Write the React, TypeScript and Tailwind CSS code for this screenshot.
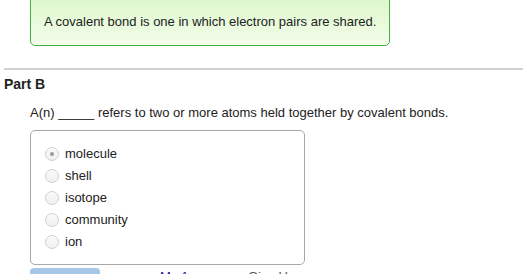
import React from 'react'

const options = ['molecule', 'shell', 'isotope', 'community', 'ion']

function Radio({ checked }: { checked: boolean }) {
  return (
    <span className="flex h-[14px] w-[14px] items-center justify-center rounded-full border border-[#d0d0d0] bg-gradient-to-b from-[#fafafa] to-[#f0f0f0]">
      {checked && <span className="h-[4px] w-[4px] rounded-full bg-[#999]" />}
    </span>
  )
}

export default function App() {
  return (
    <div className="h-[274px] w-[523px] overflow-hidden bg-white font-['Liberation_Sans',Arial,sans-serif] text-[13px] text-[#222]">
      {/* feedback box from Part A */}
      <div className="-mt-[3px] ml-[30px] w-[360px] whitespace-nowrap rounded-b-[5px] border border-[#44b044] bg-gradient-to-b from-[#def7cc] to-[#f2fdea] px-[13px] pb-[15px] pt-[16px] leading-[16px]">
        A covalent bond is one in which electron pairs are shared.
      </div>

      <div className="ml-[4px] mt-[22px] h-[2px] bg-[#cfcfcf]" />

      <h2 className="ml-[4px] mt-[6px] text-[14px] font-bold leading-[16px] text-[#222]">Part B</h2>

      <p className="ml-[30px] mt-[13px] leading-[16px]">
        A(n) _____ refers to two or more atoms held together by covalent bonds.
      </p>

      <div className="ml-[30px] mt-[9px] w-[275px] rounded-[5px] border border-[#a8a8a8] pb-[11px] pl-[14px] pt-[12px]">
        {options.map((o, i) => (
          <label key={o} className="flex h-[22px] items-center gap-[6px]">
            <Radio checked={i === 0} />
            <span>{o}</span>
          </label>
        ))}
      </div>

      <div className="ml-[30px] mt-[3px] flex items-start">
        <button className="h-[22px] w-[70px] rounded-[4px] bg-[#a6c8e6] pt-[1px] text-[13px] font-bold leading-[16px] text-white">Submit</button>
        <a className="ml-[60px] mt-[1px] leading-[16px] text-[#1515a0]">My Answers</a>
        <a className="ml-[18px] mt-[1px] leading-[16px] text-[#555]">Give Up</a>
      </div>
    </div>
  )
}
